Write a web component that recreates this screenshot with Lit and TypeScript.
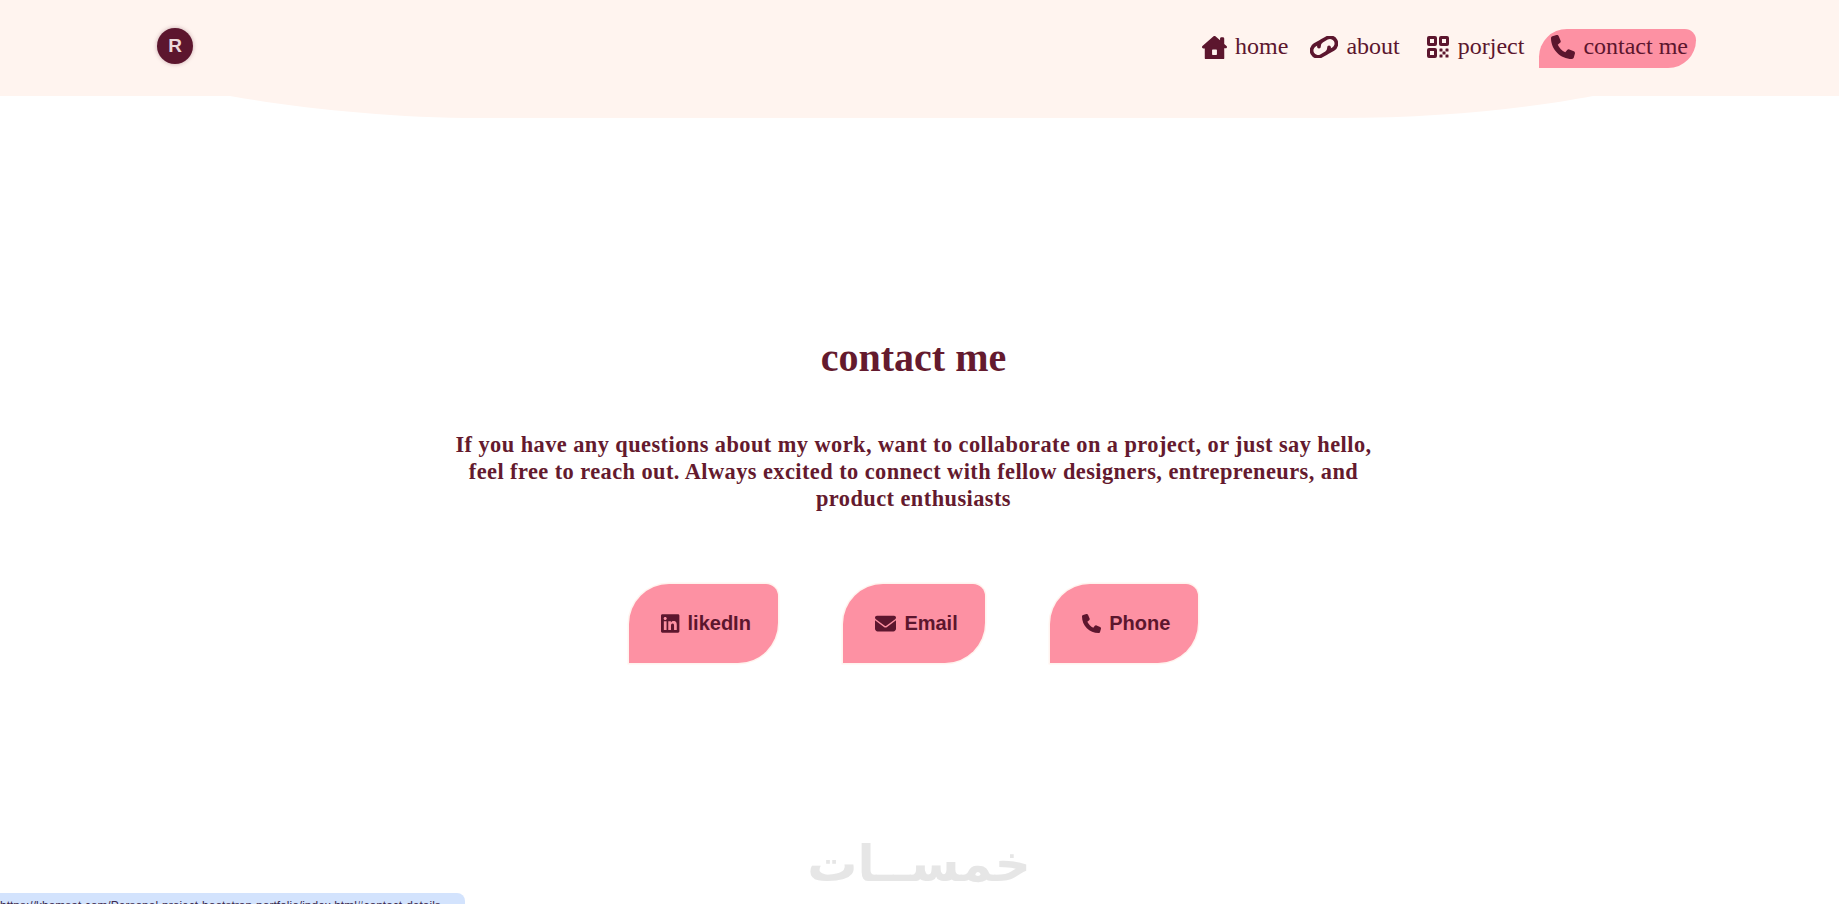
import { LitElement, css, html, svg } from "lit";
import { customElement } from "lit/decorators.js";

const phonePath =
  "M164.9 24.6c-7.7-18.6-28-28.5-47.4-23.2l-88 24C12.1 30.2 0 46 0 64C0 311.4 200.6 512 448 512c18 0 33.8-12.1 38.6-29.5l24-88c5.3-19.4-4.6-39.7-23.2-47.4l-96-40c-16.3-6.8-35.2-2.1-46.3 11.6L304.7 368C234.3 334.7 177.3 277.7 144 207.3L193.3 167c13.7-11.2 18.4-30 11.6-46.3l-40-96z";

const icons = {
  home: html`<svg class="ic-home" viewBox="0 0 576 512">
    <path
      fill-rule="evenodd"
      d="M288 0c8 0 15 2 21 7L416 100V64c0-18 14-32 32-32h32c18 0 32 14 32 32v121l53 46c8 7 12 15 11 24 0 18-15 32-32 32h-32l1 160v65c0 22-18 40-40 40H104c-22 0-40-18-40-40V288H32c-18 0-32-14-32-32 0-9 3-17 10-25L266 8c7-7 15-8 22-8zM248 312c-9 0-16 7-16 16v96c0 9 7 16 16 16h80c9 0 16-7 16-16v-96c0-9-7-16-16-16h-80z"
    />
  </svg>`,
  link: html`<svg class="ic-link" viewBox="2 1.5 24 19">
    <g
      fill="none"
      stroke="#5c162e"
      stroke-width="3.2"
      stroke-linecap="round"
      transform="rotate(-30 14 11)"
    >
      <path d="M12.5 5.5H8a5.5 5.5 0 0 0 0 11h5a5.5 5.5 0 0 0 4.6-3" />
      <path d="M15.5 16.5H20a5.5 5.5 0 0 0 0-11h-5a5.5 5.5 0 0 0-4.6 3" />
    </g>
  </svg>`,
  qr: html`<svg class="ic-qr" viewBox="0 0 22 22">
    <path
      fill-rule="evenodd"
      d="M2 0h6a2 2 0 0 1 2 2v6a2 2 0 0 1-2 2H2a2 2 0 0 1-2-2V2a2 2 0 0 1 2-2zM3 3v4h4V3H3zM14 0h6a2 2 0 0 1 2 2v6a2 2 0 0 1-2 2h-6a2 2 0 0 1-2-2V2a2 2 0 0 1 2-2zM15 3v4h4V3h-4zM2 12h6a2 2 0 0 1 2 2v6a2 2 0 0 1-2 2H2a2 2 0 0 1-2-2v-6a2 2 0 0 1 2-2zM3 15v4h4v-4H3z"
    />
    <rect x="12.5" y="12.5" width="3" height="3" rx=".6" />
    <rect x="18.5" y="12.5" width="3" height="3" rx=".6" />
    <rect x="15.5" y="15.5" width="3" height="3" rx=".6" />
    <rect x="12.5" y="18.5" width="3" height="3" rx=".6" />
    <rect x="18.5" y="18.5" width="3" height="3" rx=".6" />
  </svg>`,
  phone: html`<svg class="ic-phone" viewBox="0 0 512 512">
    <path d=${phonePath} />
  </svg>`,
  linkedin: html`<svg class="ic-in" viewBox="0 0 448 512">
    <path
      d="M416 32H31.9C14.3 32 0 46.5 0 64.3v383.4C0 465.5 14.3 480 31.9 480H416c17.6 0 32-14.5 32-32.3V64.3c0-17.8-14.4-32.3-32-32.3zM135.4 416H69V202.2h66.5V416zm-33.2-243c-21.3 0-38.5-17.3-38.5-38.5S80.9 96 102.2 96c21.2 0 38.5 17.3 38.5 38.5 0 21.3-17.2 38.5-38.5 38.5zm282.1 243h-66.4V312c0-24.8-.5-56.7-34.5-56.7-34.6 0-39.9 27-39.9 54.9V416h-66.4V202.2h63.7v29.2h.9c8.9-16.8 30.6-34.5 62.9-34.5 67.2 0 79.7 44.3 79.7 101.9V416z"
    />
  </svg>`,
  mail: html`<svg class="ic-mail" viewBox="0 0 512 512">
    <path
      d="M48 64C21.5 64 0 85.5 0 112c0 15.1 7.1 29.3 19.2 38.4L236.8 313.6c11.4 8.5 27 8.5 38.4 0L492.8 150.4c12.1-9.1 19.2-23.3 19.2-38.4c0-26.5-21.5-48-48-48H48zM0 176V384c0 35.3 28.7 64 64 64H448c35.3 0 64-28.7 64-64V176L294.4 339.2c-22.8 17.1-54 17.1-76.8 0L0 176z"
    />
  </svg>`,
  phoneBtn: html`<svg class="ic-tel" viewBox="0 0 512 512">
    <path d=${phonePath} />
  </svg>`,
};

const wave = svg`<path d="M0 0H230C300 12 390 22 480 22H1340C1440 22 1530 12 1593 0H1839Z" />`;

@customElement("app-root")
export class AppRoot extends LitElement {
  static styles = css`
    :host {
      display: block;
      position: relative;
      height: 904px;
      overflow: hidden;
      background: #fff;
      color: #5c162e;
      font-family: "Liberation Serif", serif;
    }
    svg {
      display: block;
      fill: #5c162e;
      flex: none;
    }
    .top {
      display: flex;
      align-items: center;
      justify-content: space-between;
      height: 96px;
      padding: 0 143px 0 157px;
      box-sizing: border-box;
      background: #fff4ef;
    }
    .wave {
      width: 1839px;
      height: 22px;
      fill: #fff4ef;
    }
    .logo {
      width: 36px;
      height: 36px;
      margin-bottom: 4px;
      border-radius: 50%;
      background: #5c162e;
      box-shadow: 0 0 4px rgba(92, 22, 46, 0.35);
      color: #ead9da;
      font: 700 19px/36px "Liberation Sans", sans-serif;
      text-align: center;
    }
    nav {
      display: flex;
      align-items: center;
      gap: 7px;
    }
    .item {
      display: flex;
      align-items: center;
      gap: 8px;
      height: 39px;
      padding: 0 8px 3px 12px;
      box-sizing: border-box;
      font-size: 24px;
    }
    .item.active {
      background: #fd91a3;
      border-radius: 30px 12px 30px 0;
    }
    .ic-home {
      width: 25px;
      height: 24px;
    }
    .ic-link {
      width: 28px;
      height: 22px;
      margin-left: -5px;
    }
    .ic-qr {
      width: 22px;
      height: 22px;
      margin-right: 1px;
    }
    .ic-phone {
      width: 24px;
      height: 24px;
    }
    main {
      width: 1827px;
      display: flex;
      flex-direction: column;
      align-items: center;
      padding-top: 216px;
      color: #641a2e;
    }
    h1 {
      margin: 0;
      font-size: 40px;
      line-height: 48px;
      font-weight: 700;
    }
    p {
      margin: 49px 0 0;
      width: 940px;
      font-size: 22.4px;
      line-height: 27px;
      font-weight: 700;
      letter-spacing: 0.43px;
      text-align: center;
    }
    .links {
      display: flex;
      gap: 65px;
      margin-top: 72px;
      color: #5c162e;
    }
    .btn {
      display: flex;
      align-items: center;
      gap: 8px;
      height: 79px;
      padding: 0 27.5px 0 32px;
      box-sizing: border-box;
      border-radius: 40px 12px 40px 0;
      background: #fd91a3;
      box-shadow: 0 0 0 1.5px #fff4ef;
      font: 700 20px "Liberation Sans", sans-serif;
    }
    .ic-mail {
      width: 21px;
      height: 21px;
    }
    .ic-tel {
      width: 19px;
      height: 21px;
    }
    .ic-in {
      width: 18.4px;
      height: 21px;
    }
    .mark {
      position: absolute;
      left: 790px;
      top: 829px;
      width: 258px;
      color: #e6e6e6;
      font: 700 50px/70px "DejaVu Sans", sans-serif;
      text-align: center;
      direction: rtl;
    }
    .status {
      position: absolute;
      left: 0;
      bottom: 0;
      width: 465px;
      height: 11px;
      overflow: hidden;
      background: #d3e3fd;
      border-top-right-radius: 8px;
      color: #3c2a4d;
      font: 12px/27px "Liberation Sans", sans-serif;
      white-space: nowrap;
    }
  `;

  render() {
    return html`
      <header class="top">
        <div class="logo">R</div>
        <nav>
          <a class="item">${icons.home}home</a>
          <a class="item">${icons.link}about</a>
          <a class="item">${icons.qr}porject</a>
          <a class="item active">${icons.phone}contact me</a>
        </nav>
      </header>
      <svg class="wave" viewBox="0 0 1839 22" preserveAspectRatio="none">${wave}</svg>
      <main>
        <h1>contact me</h1>
        <p>
          If you have any questions about my work, want to collaborate on a
          project, or just say hello, feel free to reach out. Always excited to
          connect with fellow designers, entrepreneurs, and product enthusiasts
        </p>
        <div class="links">
          <a class="btn">${icons.linkedin}likedIn</a>
          <a class="btn">${icons.mail}Email</a>
          <a class="btn">${icons.phoneBtn}Phone</a>
        </div>
      </main>
      <div class="mark">خمســات</div>
      <div class="status">https://khamsat.com/Personal-project-bootstrap-portfolio/index.html#contact-details</div>
    `;
  }
}
